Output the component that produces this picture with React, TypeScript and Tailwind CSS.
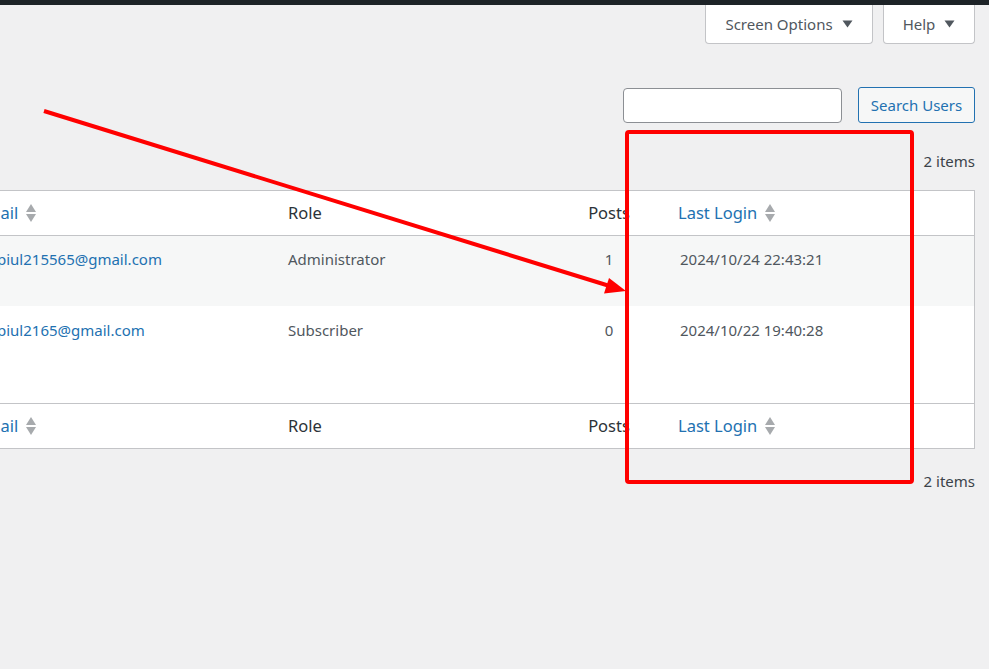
import React from 'react';

const users = [
  { email: 'piul215565@gmail.com', role: 'Administrator', posts: 1, lastLogin: '2024/10/24 22:43:21', alt: true },
  { email: 'piul2165@gmail.com', role: 'Subscriber', posts: 0, lastLogin: '2024/10/22 19:40:28', alt: false },
];

function SortIcon() {
  return (
    <svg width="12" height="20" viewBox="0 0 12 20" className="ml-[7px] shrink-0">
      <path d="M6 1 L11 9 H1 Z" fill="#a7aaad" />
      <path d="M1 11 H11 L6 19 Z" fill="#a7aaad" />
    </svg>
  );
}

function Caret() {
  return (
    <svg width="11" height="8" viewBox="0 0 11 8" className="ml-[9px]">
      <path d="M0.5 0.5 H10.5 L5.5 7.5 Z" fill="#50575e" />
    </svg>
  );
}

function HeaderRow({ top }: { top?: boolean }) {
  return (
    <div
      className={`grid grid-cols-[278px_282px_98px_1fr] h-[45px] items-center text-[16.5px] text-[#2c3338] ${
        top ? 'border-b' : 'border-t'
      } border-[#c3c4c7]`}
    >
      <div className="flex items-center text-[#2271b1]">
        <span className="-ml-[24px]">Email</span>
        <SortIcon />
      </div>
      <div className="pl-[10px]">Role</div>
      <div className="text-center">Posts</div>
      <div className="flex items-center pl-[20px] text-[#2271b1]">
        <span>Last Login</span>
        <SortIcon />
      </div>
    </div>
  );
}

export default function App() {
  return (
    <div
      className="relative min-h-[669px] bg-[#f0f0f1] overflow-hidden text-[15px] text-[#50575e]"
      style={{ fontFamily: '"Noto Sans", "Open Sans", sans-serif' }}
    >
      <div className="h-[5px] bg-[#1d2327]" />

      <div className="flex justify-end gap-[10px] pr-[14px]">
        <button className="flex items-center h-[39px] w-[168px] justify-center bg-white border border-t-0 border-[#c3c4c7] rounded-b-[4px] text-[15px] text-[#50575e]">
          Screen Options
          <Caret />
        </button>
        <button className="flex items-center h-[39px] w-[92px] justify-center bg-white border border-t-0 border-[#c3c4c7] rounded-b-[4px] text-[15px] text-[#50575e]">
          Help
          <Caret />
        </button>
      </div>

      <div className="flex justify-end items-center gap-[16px] pr-[14px] mt-[43px]">
        <input className="h-[35px] w-[219px] bg-white border border-[#8c8f94] rounded-[4px] outline-none" />
        <button className="h-[36px] w-[117px] bg-[#f6f7f7] border border-[#2271b1] rounded-[3px] text-[15px] text-[#2271b1]">
          Search Users
        </button>
      </div>

      <div className="mt-[28px] pr-[14px] h-[20px] leading-[20px] text-right text-[15px] text-[#3c434a]">2 items</div>

      <div className="mt-[19px] w-[975px] bg-white border-y border-r border-[#c3c4c7] overflow-hidden">
        <HeaderRow top />
        {users.map((u) => (
          <div
            key={u.email}
            className={`grid grid-cols-[278px_282px_98px_1fr] leading-[20px] ${
              u.alt ? 'h-[70px] bg-[#f6f7f7] pt-[13px]' : 'h-[97px] bg-white pt-[14px]'
            }`}
          >
            <div className="text-[#2271b1] -ml-[3px] whitespace-nowrap">{u.email}</div>
            <div className="pl-[10px]">{u.role}</div>
            <div className="text-center">{u.posts}</div>
            <div className="pl-[22px]">{u.lastLogin}</div>
          </div>
        ))}
        <HeaderRow />
      </div>

      <div className="mt-[22px] pr-[14px] h-[20px] leading-[20px] text-right text-[15px] text-[#3c434a]">2 items</div>

      <svg
        className="absolute left-0 top-0 pointer-events-none"
        width="989"
        height="669"
        viewBox="0 0 989 669"
      >
        <line x1="44" y1="111" x2="608" y2="285.5" stroke="#ff0000" strokeWidth="4" />
        <path d="M626 291 L604 293.5 L609 278 Z" fill="#ff0000" />
        <rect x="627" y="132" width="285" height="350" rx="2" fill="none" stroke="#ff0000" strokeWidth="4" />
      </svg>
    </div>
  );
}
